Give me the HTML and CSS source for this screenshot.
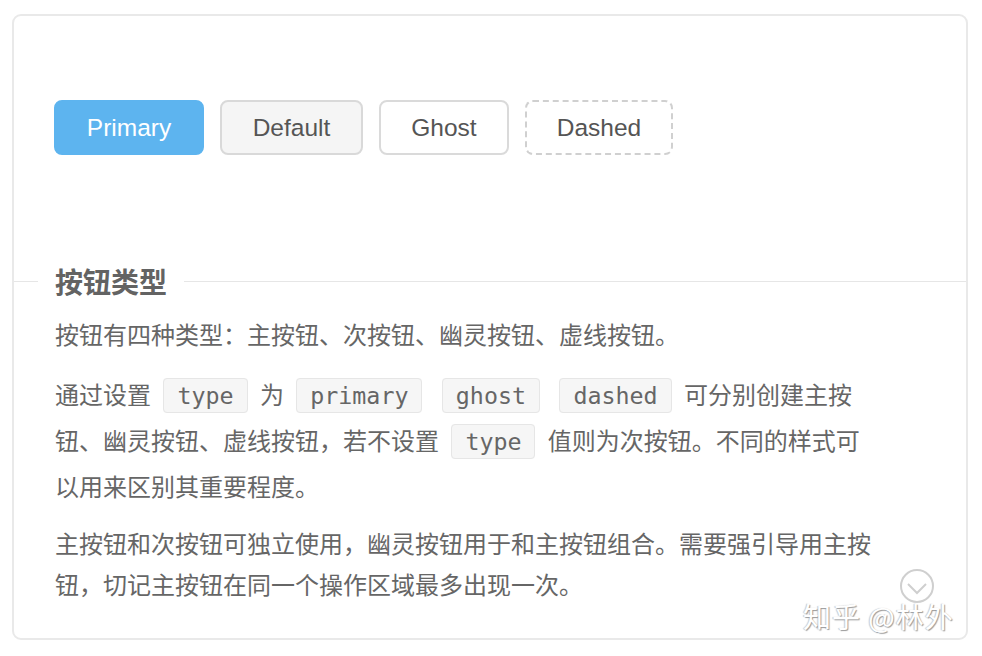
FILE: index.html
```html
<!DOCTYPE html>
<html lang="zh-CN">
<head>
<meta charset="utf-8">
<title>按钮类型</title>
<link rel="stylesheet" href="styles.css">
</head>
<body>
<div class="card">
  <div class="demo">
    <button class="btn btn-primary">Primary</button>
    <button class="btn btn-default">Default</button>
    <button class="btn btn-ghost">Ghost</button>
    <button class="btn btn-dashed">Dashed</button>
  </div>
  <div class="divider"><span class="divider-title">按钮类型</span></div>
  <div class="desc">
    <p class="p1">按钮有四种类型：主按钮、次按钮、幽灵按钮、虚线按钮。</p>
    <p class="p2">通过设置 <code>type</code> 为 <code>primary</code> <code>ghost</code> <code>dashed</code> 可分别创建主按钮、幽灵按钮、虚线按钮，若不设置 <code>type</code> 值则为次按钮。不同的样式可以用来区别其重要程度。</p>
    <p class="p3">主按钮和次按钮可独立使用，幽灵按钮用于和主按钮组合。需要强引导用主按钮，切记主按钮在同一个操作区域最多出现一次。</p>
  </div>
  <div class="expand">
    <svg width="36" height="36" viewBox="0 0 36 36"><circle cx="18" cy="18" r="16" fill="none" stroke="#cfcfcf" stroke-width="2"/><path d="M9 16 L18 25 L27 16" fill="none" stroke="#cfcfcf" stroke-width="2"/></svg>
  </div>
  <div class="watermark">知乎 @林外</div>
</div>
</body>
</html>
```
FILE: styles.css
```css
html, body {
  margin: 0;
  padding: 0;
  background: #ffffff;
}
body {
  font-family: "Noto Sans CJK SC", "Noto Sans", sans-serif;
}
.card {
  position: relative;
  box-sizing: border-box;
  margin: 14px 0 0 12px;
  width: 956px;
  height: 626px;
  border: 2px solid #e9e9e9;
  border-radius: 9px;
  background: #fff;
}
.demo {
  display: flex;
  gap: 16px;
  padding: 84px 0 0 40px;
}
.btn {
  box-sizing: border-box;
  height: 55px;
  font-family: "Liberation Sans", Arial, sans-serif;
  font-size: 24.5px;
  border-radius: 8px;
  color: #555555;
  background: #fff;
  border: 2px solid #dadada;
  padding: 0;
  cursor: pointer;
}
.btn-primary {
  width: 150px;
  background: #5db4ef;
  border-color: #5db4ef;
  color: #fff;
}
.btn-default {
  width: 143px;
  background: #f5f5f5;
  border-color: #d9d9d9;
}
.btn-ghost {
  width: 130px;
}
.btn-dashed {
  width: 148px;
  border-style: dashed;
  border-color: #d0d0d0;
}
.divider {
  display: flex;
  align-items: center;
  gap: 17px;
  margin-top: 111px;
  height: 30px;
}
.divider::before {
  content: "";
  width: 24px;
  height: 1px;
  background: #e6e6e6;
}
.divider::after {
  content: "";
  flex: 1;
  height: 1px;
  background: #e6e6e6;
}
.divider-title {
  font-size: 28px;
  line-height: 30px;
  font-weight: 700;
  color: #636363;
}
.desc {
  padding-left: 41px;
  width: 821px;
  color: #666666;
  font-size: 24px;
}
.desc p {
  margin: 0;
}
.p1 {
  margin-top: 17px !important;
  line-height: 41px;
}
.p2 {
  margin-top: 17px !important;
  line-height: 46px;
}
.p3 {
  margin-top: 13px !important;
  line-height: 41px;
}
code {
  font-family: "DejaVu Sans Mono", "Liberation Mono", monospace;
  font-size: 23.3px;
  line-height: 24px;
  color: #666;
  background: #f6f6f6;
  border: 1px solid #e6e6e6;
  border-radius: 4px;
  padding: 3px 13px;
  margin: 0 7px;
}
.expand {
  position: absolute;
  left: 885px;
  top: 552px;
  width: 36px;
  height: 36px;
}
.expand svg {
  display: block;
}
.watermark {
  position: absolute;
  left: 789px;
  top: 583px;
  font-size: 28px;
  line-height: 34px;
  color: #ffffff;
  letter-spacing: 1px;
  text-shadow: 1px 1px 1px #9a9a9a, -1px 0 1px #c8c8c8;
  white-space: nowrap;
}
```
